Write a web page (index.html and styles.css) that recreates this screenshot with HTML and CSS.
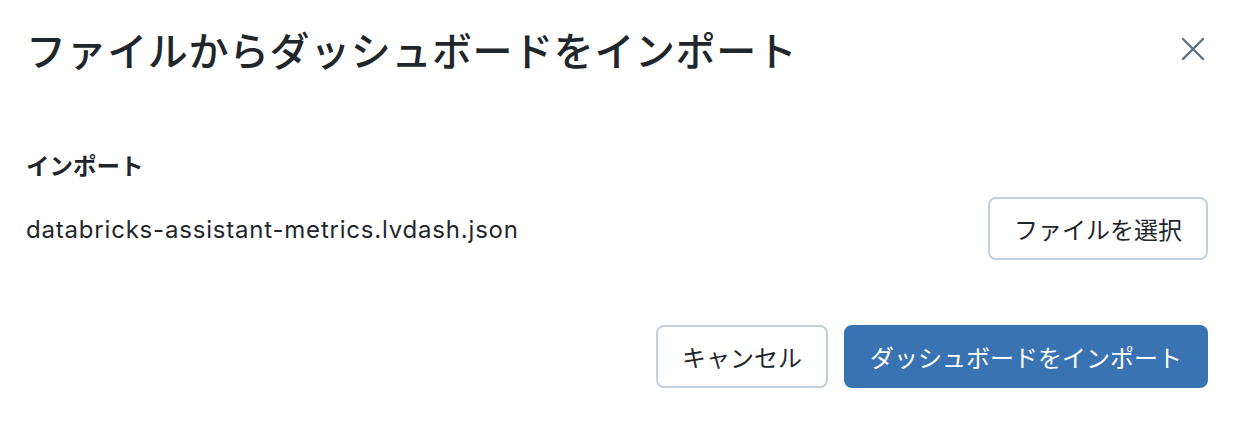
FILE: index.html
```html
<!DOCTYPE html>
<html lang="ja">
<head>
    <meta charset="UTF-8">
    <meta name="viewport" content="width=device-width, initial-scale=1.0">
    <title>ファイルからダッシュボードをインポート</title>
    <link rel="stylesheet" href="styles.css">
</head>
<body>
    <div class="dialog">
        <div class="dialogHeader">
            <h1 class="dialogTitle">ファイルからダッシュボードをインポート</h1>
            <button class="closeBtn" aria-label="閉じる">
                <svg width="24" height="24" viewBox="0 0 24 24">
                    <path d="M2 2 L22 22 M22 2 L2 22" stroke="#5f7281" stroke-width="2.4" stroke-linecap="round" fill="none"/>
                </svg>
            </button>
        </div>

        <div class="dialogBody">
            <div class="fieldLabel">インポート</div>
            <div class="fileRow">
                <span class="fileName">databricks-assistant-metrics.lvdash.json</span>
                <button class="btn">ファイルを選択</button>
            </div>
        </div>

        <div class="dialogFooter">
            <button class="btn">キャンセル</button>
            <button class="btn primary">ダッシュボードをインポート</button>
        </div>
    </div>
</body>
</html>
```

FILE: styles.css
```css
body{
    margin: 0;
    background: #fff;
    color: #1f272d;
    font-family: Inter, "Noto Sans CJK JP", sans-serif;
    font-size: 24px;
}
.dialog{
    padding: 25px 42px 0 26px;
}
.dialogHeader{
    display: flex;
    justify-content: space-between;
    align-items: center;
    height: 48px;
}
.dialogTitle{
    margin: 0;
    font-family: "Noto Sans CJK JP", sans-serif;
    font-size: 40px;
    font-weight: 500;
    letter-spacing: 0.6px;
    line-height: 48px;
}
.closeBtn{
    background: none;
    border: none;
    padding: 0;
    margin-right: 3px;
    width: 24px;
    height: 24px;
    cursor: pointer;
}
.closeBtn svg{
    display: block;
}
.dialogBody{
    padding-top: 76px;
}
.fieldLabel{
    font-family: "Noto Sans CJK JP", sans-serif;
    font-size: 23.5px;
    font-weight: 600;
    line-height: 32px;
}
.fileRow{
    display: flex;
    justify-content: space-between;
    align-items: center;
    margin-top: 16px;
}
.fileName{
    letter-spacing: 0.8px;
    padding-top: 2px;
}
.btn{
    height: 63px;
    padding: 0 24px;
    border: 2px solid #c4cfd9;
    border-radius: 8px;
    background: #fff;
    color: #1f272d;
    font-family: "Noto Sans CJK JP", sans-serif;
    font-size: 24px;
    cursor: pointer;
}
.btn.primary{
    background: #3a73b1;
    border-color: #3a73b1;
    color: #fff;
}
.dialogFooter{
    display: flex;
    justify-content: flex-end;
    gap: 16px;
    margin-top: 65px;
}
```
